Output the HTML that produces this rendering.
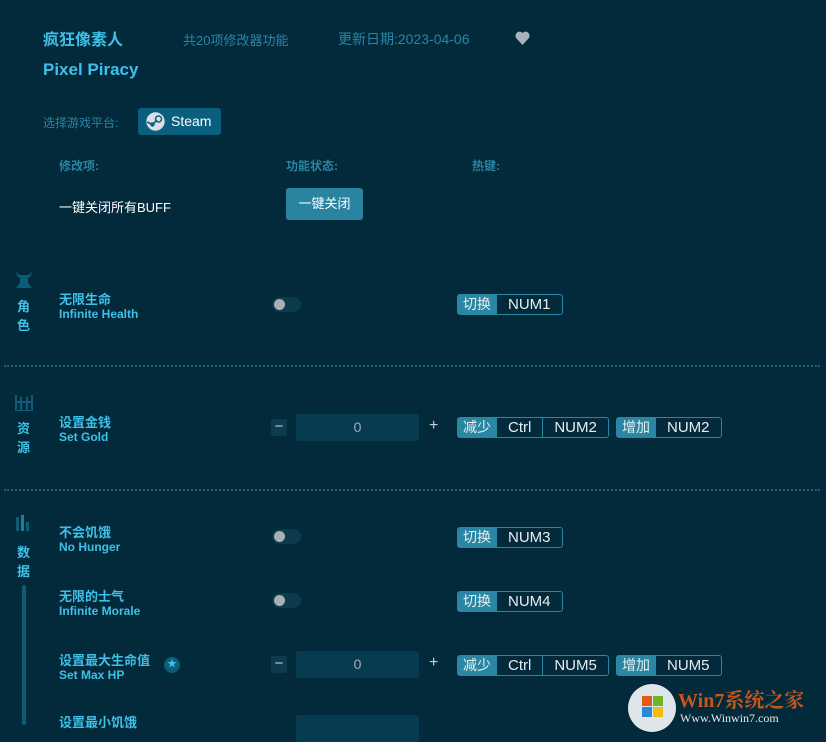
<!DOCTYPE html>
<html><head><meta charset="utf-8"><style>
*{margin:0;padding:0;box-sizing:border-box}
body{width:826px;height:733px;overflow:hidden;background:#022a3a;font-family:"Liberation Sans","Noto Sans CJK SC",sans-serif;position:relative;color:#fff}
.a{position:absolute;white-space:nowrap}
.t{color:#3ec0e8;font-weight:bold}
.m{color:#2a85a5}
.cn{font-size:13px;color:#3ec0e8;font-weight:bold}
.en{font-size:12px;color:#3ec0e8;font-weight:bold}
.tog{position:absolute;width:29px;height:15px;border-radius:8px;background:#0b3b4d}
.tog:after{content:"";position:absolute;left:2px;top:2px;width:11px;height:11px;border-radius:50%;background:#a8b0b5}
.hk{position:absolute;display:flex;height:21px;border:1px solid #2a87a3;border-radius:3px;font-size:15px;color:#e8eef0;line-height:19px}
.hk span{padding:0 11px;border-left:1px solid #2a87a3}
.hk span.l{background:#2a87a3;padding:0 5px;border:0;font-size:14px}
.btn{position:absolute;width:16px;height:17px;background:#0b3b4d;border-radius:2px;color:#ccd;text-align:center;line-height:16px;font-size:15px}
.inp{position:absolute;width:123px;height:27px;background:#073c50;border-radius:3px;color:#aab;text-align:center;line-height:27px;font-size:14px}
.div{position:absolute;left:4px;width:816px;border-top:2px dotted #1a6078}
.side{position:absolute;left:17px;font-size:13px;color:#3ec0e8;font-weight:bold;width:14px;line-height:19px}
</style></head><body>
<div class="a t" style="left:43px;top:26px;font-size:16px">疯狂像素人</div>
<div class="a m" style="left:183px;top:30px;font-size:13px">共20项修改器功能</div>
<div class="a m" style="left:338px;top:29px;font-size:14px">更新日期:2023-04-06</div>
<svg class="a" style="left:515px;top:31px" width="15" height="14" viewBox="0 0 15 14"><path d="M7.5 14 L1.5 7.5 A3.6 3.6 0 0 1 7.5 2 A3.6 3.6 0 0 1 13.5 7.5 Z" fill="#a8b2ba"/></svg>
<div class="a t" style="left:43px;top:60px;font-size:17px">Pixel Piracy</div>
<div class="a m" style="left:43px;top:114px;font-size:12px">选择游戏平台:</div>
<div class="a" style="left:138px;top:108px;width:83px;height:27px;background:#0b5f7e;border-radius:3px"></div>
<svg class="a" style="left:146px;top:112px" width="19" height="19" viewBox="0 0 19 19"><circle cx="9.5" cy="9.5" r="9.2" fill="#d8e0e6"/><circle cx="12.5" cy="7" r="3" fill="none" stroke="#0b5f7e" stroke-width="1.5"/><circle cx="6.5" cy="12.5" r="2.2" fill="#0b5f7e"/><path d="M1 10 L6.5 12.5 L11 8" stroke="#0b5f7e" stroke-width="1.6" fill="none"/></svg>
<div class="a" style="left:171px;top:113px;font-size:14px;color:#fff">Steam</div>
<div class="a m" style="left:59px;top:157px;font-size:12px;font-weight:bold">修改项:</div>
<div class="a m" style="left:286px;top:157px;font-size:12px;font-weight:bold">功能状态:</div>
<div class="a m" style="left:472px;top:157px;font-size:12px;font-weight:bold">热键:</div>
<div class="a" style="left:59px;top:197px;font-size:13px">一键关闭所有BUFF</div>
<div class="a" style="left:286px;top:188px;width:77px;height:32px;background:#2a84a0;border-radius:3px;font-size:13px;text-align:center;line-height:32px">一键关闭</div>

<svg class="a" style="left:15px;top:271px" width="18" height="17" viewBox="0 0 18 17"><path d="M1 0 L4 4 L14 4 L17 0 L16 5 L13 7 L13 12 L17 17 L1 17 L5 12 L5 7 L2 5 Z" fill="#0e5d78"/></svg>
<div class="side" style="top:297px">角<br>色</div>
<div class="a cn" style="left:59px;top:289px">无限生命</div>
<div class="a en" style="left:59px;top:307px">Infinite Health</div>
<div class="tog" style="left:272px;top:297px"></div>
<div class="hk" style="left:457px;top:294px"><span class="l">切换</span><span>NUM1</span></div>
<div class="div" style="top:365px"></div>

<svg class="a" style="left:15px;top:395px" width="18" height="16" viewBox="0 0 18 16"><path d="M1 0 V16 H17 V0 M1 7 H17 M6 2 V16 M12 2 V16" stroke="#0e5d78" stroke-width="2" fill="none"/></svg>
<div class="side" style="top:419px">资<br>源</div>
<div class="a cn" style="left:59px;top:412px">设置金钱</div>
<div class="a en" style="left:59px;top:430px">Set Gold</div>
<div class="btn" style="left:271px;top:419px">−</div>
<div class="inp" style="left:296px;top:414px">0</div>
<div class="a" style="left:429px;top:417px;font-size:16px;color:#ccd">+</div>
<div class="hk" style="left:457px;top:417px"><span class="l">减少</span><span>Ctrl</span><span>NUM2</span></div>
<div class="hk" style="left:616px;top:417px"><span class="l">增加</span><span>NUM2</span></div>
<div class="div" style="top:489px"></div>

<div class="a" style="left:16px;top:517px;width:3px;height:14px;background:#0e5d78"></div>
<div class="a" style="left:21px;top:515px;width:3px;height:16px;background:#1a7fa0"></div>
<div class="a" style="left:26px;top:522px;width:3px;height:9px;background:#0e5d78"></div>
<div class="side" style="top:543px">数<br>据</div>
<div class="a" style="left:22px;top:585px;width:4px;height:140px;background:#0e5d78;border-radius:2px"></div>
<div class="a cn" style="left:59px;top:522px">不会饥饿</div>
<div class="a en" style="left:59px;top:540px">No Hunger</div>
<div class="tog" style="left:272px;top:529px"></div>
<div class="hk" style="left:457px;top:527px"><span class="l">切换</span><span>NUM3</span></div>
<div class="a cn" style="left:59px;top:586px">无限的士气</div>
<div class="a en" style="left:59px;top:604px">Infinite Morale</div>
<div class="tog" style="left:272px;top:593px"></div>
<div class="hk" style="left:457px;top:591px"><span class="l">切换</span><span>NUM4</span></div>
<div class="a cn" style="left:59px;top:650px">设置最大生命值</div>
<div class="a en" style="left:59px;top:668px">Set Max HP</div>
<div class="a" style="left:164px;top:657px;width:16px;height:16px;border-radius:50%;background:#0e5d78;color:#3ec0e8;font-size:10px;text-align:center;line-height:16px">★</div>
<div class="btn" style="left:271px;top:656px">−</div>
<div class="inp" style="left:296px;top:651px">0</div>
<div class="a" style="left:429px;top:654px;font-size:16px;color:#ccd">+</div>
<div class="hk" style="left:457px;top:655px"><span class="l">减少</span><span>Ctrl</span><span>NUM5</span></div>
<div class="hk" style="left:616px;top:655px"><span class="l">增加</span><span>NUM5</span></div>
<div class="a cn" style="left:59px;top:712px">设置最小饥饿</div>
<div class="inp" style="left:296px;top:715px"></div>

<div class="a" style="left:628px;top:684px;width:48px;height:48px;border-radius:50%;background:#dfe6ea"></div>
<div class="a" style="left:642px;top:696px;width:10px;height:10px;background:#e25a1c"></div>
<div class="a" style="left:653px;top:696px;width:10px;height:10px;background:#6fb52c"></div>
<div class="a" style="left:642px;top:707px;width:10px;height:10px;background:#2a8ad6"></div>
<div class="a" style="left:653px;top:707px;width:10px;height:10px;background:#f5bb14"></div>
<div class="a" style="left:678px;top:684px;font-size:20px;font-weight:bold;color:#c6561a;font-family:'Liberation Serif','Noto Serif CJK SC',serif">Win7系统之家</div>
<div class="a" style="left:680px;top:711px;font-size:12px;color:#e8e8e8;font-family:'Liberation Serif',serif">Www.Winwin7.com</div>
</body></html>
